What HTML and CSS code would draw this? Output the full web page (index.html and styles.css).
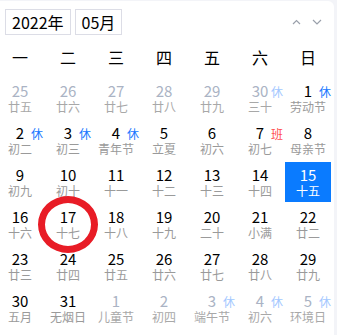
FILE: index.html
```html
<!DOCTYPE html>
<html lang="zh-CN">
<head>
<meta charset="utf-8">
<link rel="stylesheet" href="styles.css">
</head>
<body>
<div class="card">
  <div class="header">
    <div class="selects">
      <span class="sel">2022年</span>
      <span class="sel">05月</span>
    </div>
    <div class="arrows">
      <svg class="arrow" width="9" height="6" viewBox="0 0 9 6"><path d="M1 5 L4.5 1.5 L8 5" fill="none" stroke="#9aa0ab" stroke-width="1.2"/></svg>
      <svg class="arrow" width="10" height="6" viewBox="0 0 10 6"><path d="M1 1 L5 5 L9 1" fill="none" stroke="#9aa0ab" stroke-width="1.2"/></svg>
    </div>
  </div>
  <div class="grid weekdays">
    <span>一</span><span>二</span><span>三</span><span>四</span><span>五</span><span>六</span><span>日</span>
  </div>
  <div class="grid days">
    <div class="cell other"><span class="num">25</span><span class="lunar">廿五</span></div>
    <div class="cell other"><span class="num">26</span><span class="lunar">廿六</span></div>
    <div class="cell other"><span class="num">27</span><span class="lunar">廿七</span></div>
    <div class="cell other"><span class="num">28</span><span class="lunar">廿八</span></div>
    <div class="cell other"><span class="num">29</span><span class="lunar">廿九</span></div>
    <div class="cell other"><span class="num">30</span><span class="lunar">三十</span><span class="badge rest">休</span></div>
    <div class="cell"><span class="num">1</span><span class="lunar">劳动节</span><span class="badge rest">休</span></div>

    <div class="cell"><span class="num">2</span><span class="lunar">初二</span><span class="badge rest">休</span></div>
    <div class="cell"><span class="num">3</span><span class="lunar">初三</span><span class="badge rest">休</span></div>
    <div class="cell"><span class="num">4</span><span class="lunar">青年节</span><span class="badge rest">休</span></div>
    <div class="cell"><span class="num">5</span><span class="lunar">立夏</span></div>
    <div class="cell"><span class="num">6</span><span class="lunar">初六</span></div>
    <div class="cell"><span class="num">7</span><span class="lunar">初七</span><span class="badge work">班</span></div>
    <div class="cell"><span class="num">8</span><span class="lunar">母亲节</span></div>

    <div class="cell"><span class="num">9</span><span class="lunar">初九</span></div>
    <div class="cell"><span class="num">10</span><span class="lunar">初十</span></div>
    <div class="cell"><span class="num">11</span><span class="lunar">十一</span></div>
    <div class="cell"><span class="num">12</span><span class="lunar">十二</span></div>
    <div class="cell"><span class="num">13</span><span class="lunar">十三</span></div>
    <div class="cell"><span class="num">14</span><span class="lunar">十四</span></div>
    <div class="cell selected"><span class="num">15</span><span class="lunar">十五</span></div>

    <div class="cell"><span class="num">16</span><span class="lunar">十六</span></div>
    <div class="cell"><span class="num">17</span><span class="lunar">十七</span></div>
    <div class="cell"><span class="num">18</span><span class="lunar">十八</span></div>
    <div class="cell"><span class="num">19</span><span class="lunar">十九</span></div>
    <div class="cell"><span class="num">20</span><span class="lunar">二十</span></div>
    <div class="cell"><span class="num">21</span><span class="lunar">小满</span></div>
    <div class="cell"><span class="num">22</span><span class="lunar">廿二</span></div>

    <div class="cell"><span class="num">23</span><span class="lunar">廿三</span></div>
    <div class="cell"><span class="num">24</span><span class="lunar">廿四</span></div>
    <div class="cell"><span class="num">25</span><span class="lunar">廿五</span></div>
    <div class="cell"><span class="num">26</span><span class="lunar">廿六</span></div>
    <div class="cell"><span class="num">27</span><span class="lunar">廿七</span></div>
    <div class="cell"><span class="num">28</span><span class="lunar">廿八</span></div>
    <div class="cell"><span class="num">29</span><span class="lunar">廿九</span></div>

    <div class="cell"><span class="num">30</span><span class="lunar">五月</span></div>
    <div class="cell"><span class="num">31</span><span class="lunar">无烟日</span></div>
    <div class="cell other"><span class="num">1</span><span class="lunar">儿童节</span></div>
    <div class="cell other"><span class="num">2</span><span class="lunar">初四</span></div>
    <div class="cell other"><span class="num">3</span><span class="lunar">端午节</span><span class="badge rest">休</span></div>
    <div class="cell other"><span class="num">4</span><span class="lunar">初六</span><span class="badge rest">休</span></div>
    <div class="cell other"><span class="num">5</span><span class="lunar">环境日</span><span class="badge rest">休</span></div>
  </div>
  <div class="circle"></div>
</div>
</body>
</html>
```

FILE: styles.css
```css
html, body {
  margin: 0;
  padding: 0;
  background: #f3f4f8;
}
body {
  font-family: "Noto Sans CJK SC", "Noto Sans", sans-serif;
  color: #000;
}
.card {
  position: relative;
  margin-top: 1px;
  width: 334px;
  height: 334px;
  background: #fff;
  border-radius: 0 6px 0 0;
  overflow: hidden;
}
.header {
  display: flex;
  justify-content: space-between;
  align-items: center;
  padding: 8px 12px 0 5px;
}
.selects {
  display: flex;
  gap: 4px;
}
.sel {
  display: block;
  height: 24px;
  line-height: 24px;
  padding: 0 6px;
  border: 1px solid #dcdde6;
  font-size: 16px;
}
.arrows {
  display: flex;
  align-items: center;
  gap: 11px;
}
.arrow {
  display: block;
}
.grid {
  display: grid;
  grid-template-columns: repeat(7, 46px);
  column-gap: 2px;
  margin-left: -3px;
}
.weekdays {
  margin-top: 11px;
  height: 22px;
  line-height: 22px;
  font-size: 16px;
  text-align: center;
}
.days {
  margin-top: 10px;
  row-gap: 2px;
}
.cell {
  position: relative;
  height: 40px;
  box-sizing: border-box;
  padding-top: 4px;
  display: flex;
  flex-direction: column;
  align-items: center;
}
.num {
  font-size: 15px;
  line-height: 17px;
  color: #000;
}
.lunar {
  margin-top: 1px;
  font-size: 12px;
  line-height: 14px;
  color: #9a9a9a;
  white-space: nowrap;
}
.other .num {
  color: #aab3c4;
}
.other .lunar {
  color: #a8a8a8;
}
.badge {
  position: absolute;
  top: 5px;
  right: 0;
  font-size: 12px;
  line-height: 17px;
}
.badge.rest {
  color: #1677ff;
}
.other .badge.rest {
  color: #a3c8ff;
}
.badge.work {
  color: #ff4d4f;
}
.selected {
  background: #0a7bff;
}
.selected .num,
.selected .lunar {
  color: #fff;
}
.circle {
  position: absolute;
  left: 38px;
  top: 195px;
  width: 46px;
  height: 43px;
  border: 7px solid #e81c26;
  border-radius: 50%;
}
```
